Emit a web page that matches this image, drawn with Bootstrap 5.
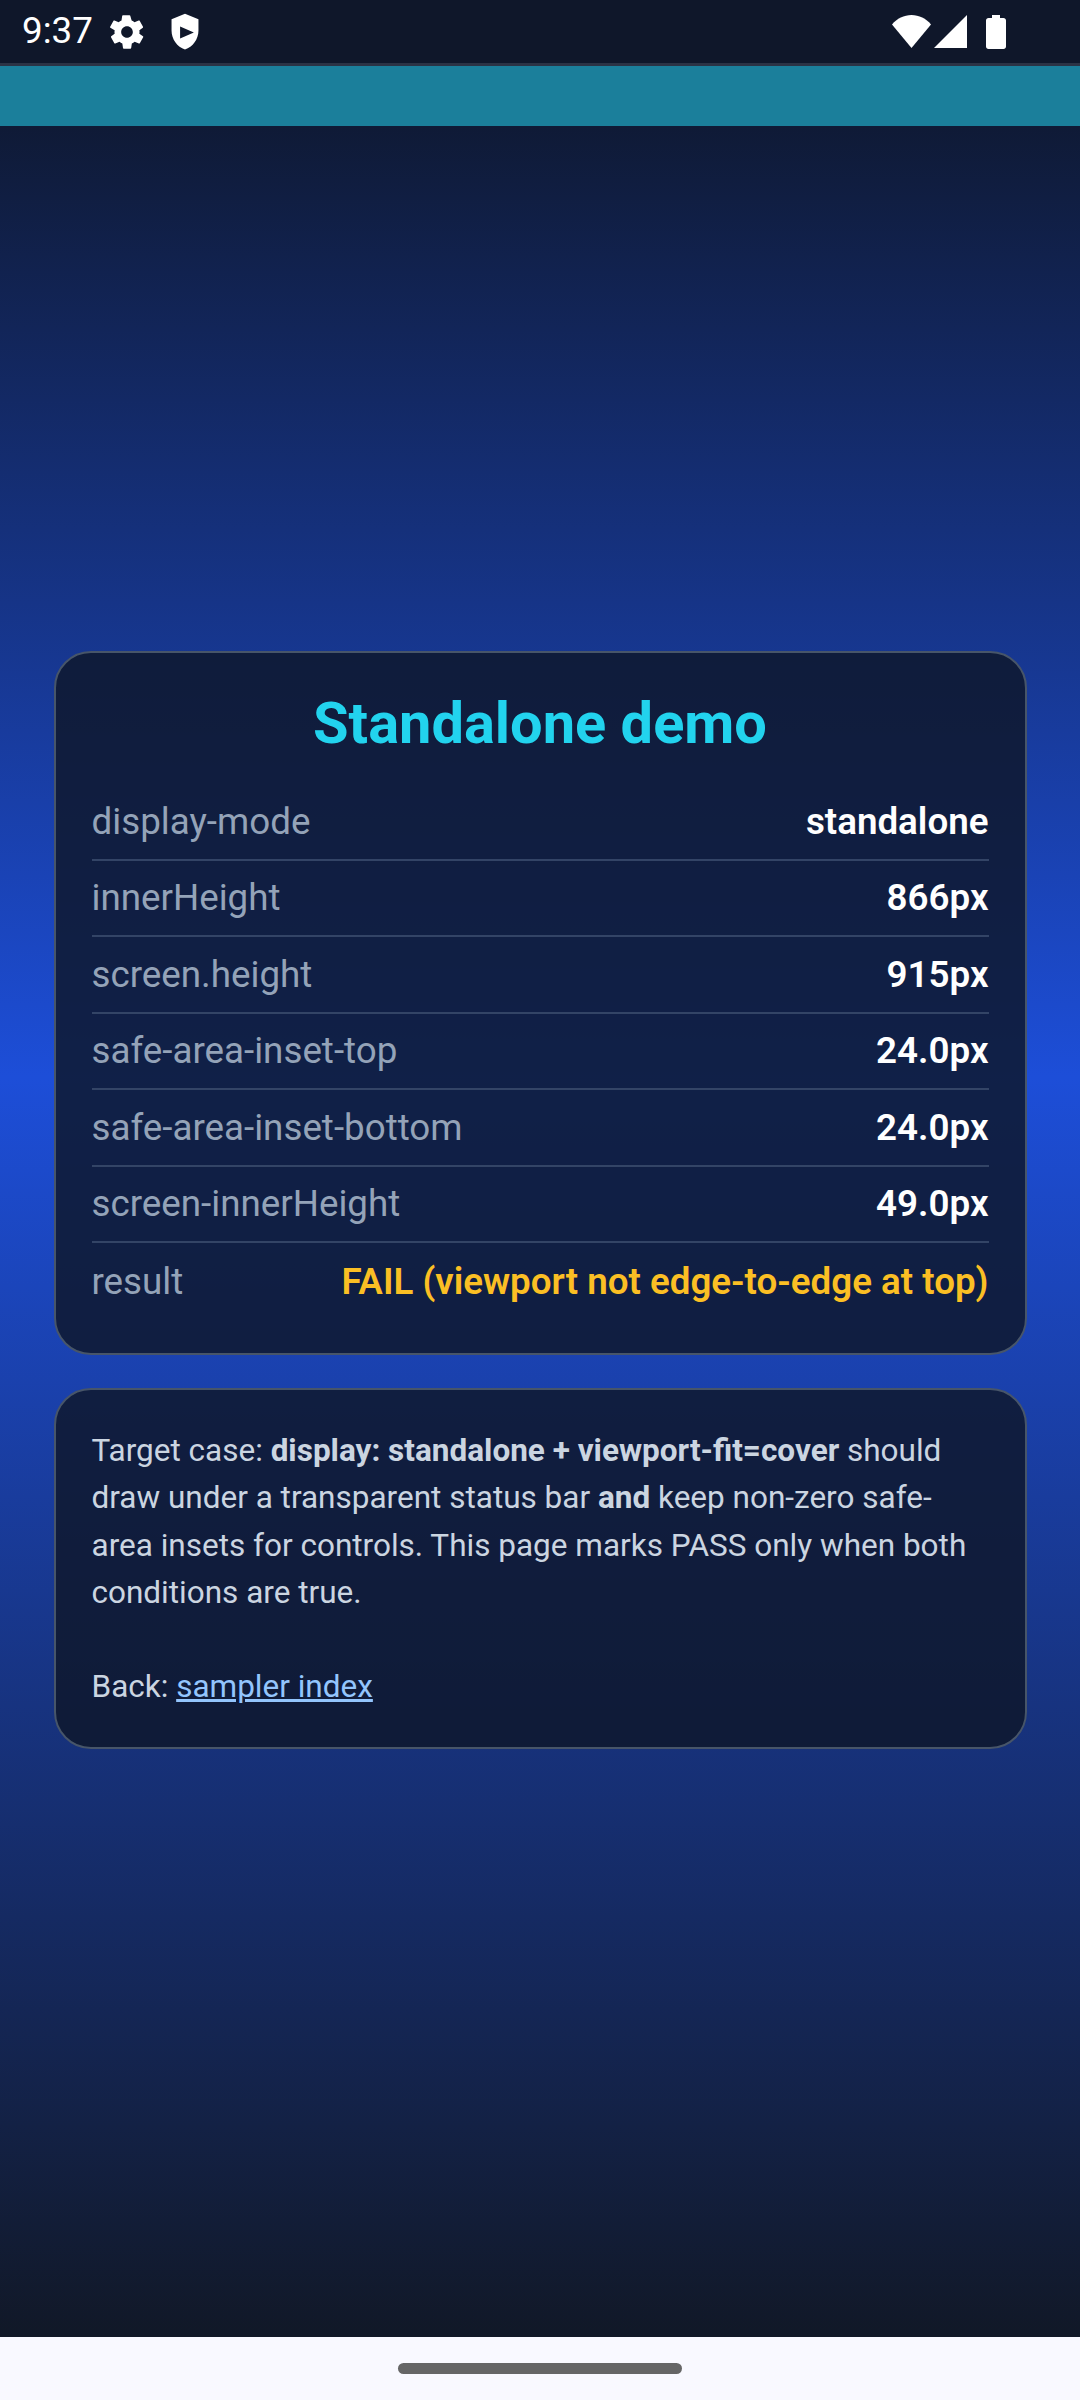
<!DOCTYPE html>
<html lang="en">
<head>
  <meta charset="UTF-8" />
  <title>Standalone demo</title>
  <link href="https://cdn.jsdelivr.net/npm/bootstrap@5.3.0/dist/css/bootstrap.min.css" rel="stylesheet">
  <style>
    html, body { height: 2400px; }
    body { font-family: Roboto, "Liberation Sans", sans-serif; background: #f9f9ff; }
    .phone { height: 2400px; width: 1080px; overflow: hidden; }
    .status-bar { height: 66px; background: #0f172a; border-bottom: 3px solid #2b3345; padding: 0 74px 0 22px; color: #fff; }
    .status-time { font-size: 36.75px; line-height: 1; width: 70px; margin-right: 15px; }
    .status-gear { margin-right: 19px; }
    .status-signal { margin-left: 2px; }
    .status-battery { margin-left: 19px; }
    .teal-strip { height: 60px; background: #1b7f9b; }
    .stage { height: 2211px; background: linear-gradient(180deg, #0f1a36 0%, #1d4ed8 43%, #111827 100%); padding: 0 53px 0 54px; }
    .info-box { background: rgba(15, 23, 42, .83); border: 2.625px solid #475569; border-radius: 37px; }
    .info-main { height: 704px; padding: 0 36.5px 0 35.5px; margin-top: 525px; }
    .info-title { font-size: 57.75px; font-weight: 700; color: #22d3ee; line-height: 1; margin: 42px 0 31.5px; }
    .info-row { height: 76.5px; border-bottom: 2px solid #334466; font-size: 36.75px; }
    .info-row:last-child { border-bottom: 0; }
    .info-key { color: #94a3b8; }
    .info-val { color: #fff; font-weight: 600; }
    .info-fail { color: #fbbf24; }
    .info-note { height: 361px; padding: 37px 35.5px 0; margin-top: 33px; font-size: 31.5px; line-height: 47.25px; color: #cbd5e1; }
    .info-note b { font-weight: 700; }
    .info-note a { color: #93c5fd; }
    .nav-strip { height: 63px; background: #f9f9ff; padding-top: 26px; }
    .nav-pill { width: 284px; height: 11px; background: #666; border-radius: 6px; }
  </style>
</head>
<body>
  <div class="phone">
    <div class="status-bar d-flex align-items-center">
      <span class="status-time">9:37</span>
      <svg width="40" height="40" viewBox="0 0 24 24" fill="#fff" class="status-gear"><path fill-rule="evenodd" d="M19.4 13c.1-.3.1-.7.1-1s0-.7-.1-1l2.100-1.600c.2-.2.2-.4.1-.6l-2-3.500c-.1-.2-.4-.3-.6-.2l-2.500 1c-.5-.4-1.100-.7-1.700-1L14 2.400c0-.2-.2-.4-.5-.4h-3.900c-.3 0-.5.2-.5.4l-.4 2.700c-.6.2-1.200.6-1.700 1l-2.500-1c-.2-.1-.5 0-.6.2l-2 3.500c-.1.2-.1.5.1.6L4.600 11c0 .3-.1.7-.1 1s0 .7.1 1l-2.100 1.600c-.2.2-.2.4-.1.6l2 3.500c.1.2.4.3.6.2l2.500-1c.5.4 1.100.7 1.700 1l.4 2.700c0 .2.2.4.5.4h3.900c.3 0 .5-.2.5-.4l.4-2.700c.6-.2 1.200-.6 1.700-1l2.500 1c.2.1.5 0 .6-.2l2-3.500c.1-.2.1-.5-.1-.6L19.400 13zM12 15.500c-1.900 0-3.500-1.600-3.500-3.500s1.600-3.500 3.500-3.500 3.500 1.600 3.500 3.500-1.600 3.500-3.500 3.500z"/></svg>
      <svg width="38" height="40" viewBox="0 0 24 25" fill="#fff"><path fill-rule="evenodd" d="M12 1 3.500 4.400v7.200c0 5.400 3.600 10.500 8.500 11.900 4.900-1.400 8.500-6.500 8.500-11.900V4.400L12 1zM8.900 9.100l8.700 3.750-8.700 3.750V9.100z"/></svg>
      <div class="ms-auto d-flex align-items-center">
        <svg width="40" height="33" viewBox="0 0 40 33" fill="#fff"><path d="M0 9.500C5 3.500 12 0 19.500 0S34 3.500 39 9.500L19.500 33 0 9.500z"/></svg>
        <svg width="33" height="33" viewBox="0 0 33 33" fill="#fff" class="status-signal"><path d="M33 0v33H0L33 0z"/></svg>
        <svg width="20" height="34" viewBox="0 0 20 34" fill="#fff" class="status-battery"><path d="M6 0h8v3h3.500c1.400 0 2.500 1.100 2.500 2.500v26c0 1.400-1.100 2.500-2.500 2.500h-15C1.100 34 0 32.900 0 31.500v-26C0 4.100 1.100 3 2.500 3H6V0z"/></svg>
      </div>
    </div>
    <div class="teal-strip"></div>
    <div class="stage d-flex flex-column">
      <div class="info-box info-main">
        <div class="info-title text-center">Standalone demo</div>
        <div class="info-row d-flex justify-content-between align-items-center"><span class="info-key">display-mode</span><span class="info-val">standalone</span></div>
        <div class="info-row d-flex justify-content-between align-items-center"><span class="info-key">innerHeight</span><span class="info-val">866px</span></div>
        <div class="info-row d-flex justify-content-between align-items-center"><span class="info-key">screen.height</span><span class="info-val">915px</span></div>
        <div class="info-row d-flex justify-content-between align-items-center"><span class="info-key">safe-area-inset-top</span><span class="info-val">24.0px</span></div>
        <div class="info-row d-flex justify-content-between align-items-center"><span class="info-key">safe-area-inset-bottom</span><span class="info-val">24.0px</span></div>
        <div class="info-row d-flex justify-content-between align-items-center"><span class="info-key">screen-innerHeight</span><span class="info-val">49.0px</span></div>
        <div class="info-row d-flex justify-content-between align-items-center"><span class="info-key">result</span><span class="info-val info-fail">FAIL (viewport not edge-to-edge at top)</span></div>
      </div>
      <div class="info-box info-note">
        Target case: <b>display: standalone + viewport-fit=cover</b> should draw under a transparent status bar <b>and</b> keep non-zero safe-area insets for controls. This page marks PASS only when both conditions are true.<br><br>
        Back: <a href="#">sampler index</a>
      </div>
    </div>
    <div class="nav-strip d-flex justify-content-center">
      <div class="nav-pill"></div>
    </div>
  </div>
  <script src="https://cdn.jsdelivr.net/npm/bootstrap@5.3.0/dist/js/bootstrap.bundle.min.js"></script>
</body>
</html>
